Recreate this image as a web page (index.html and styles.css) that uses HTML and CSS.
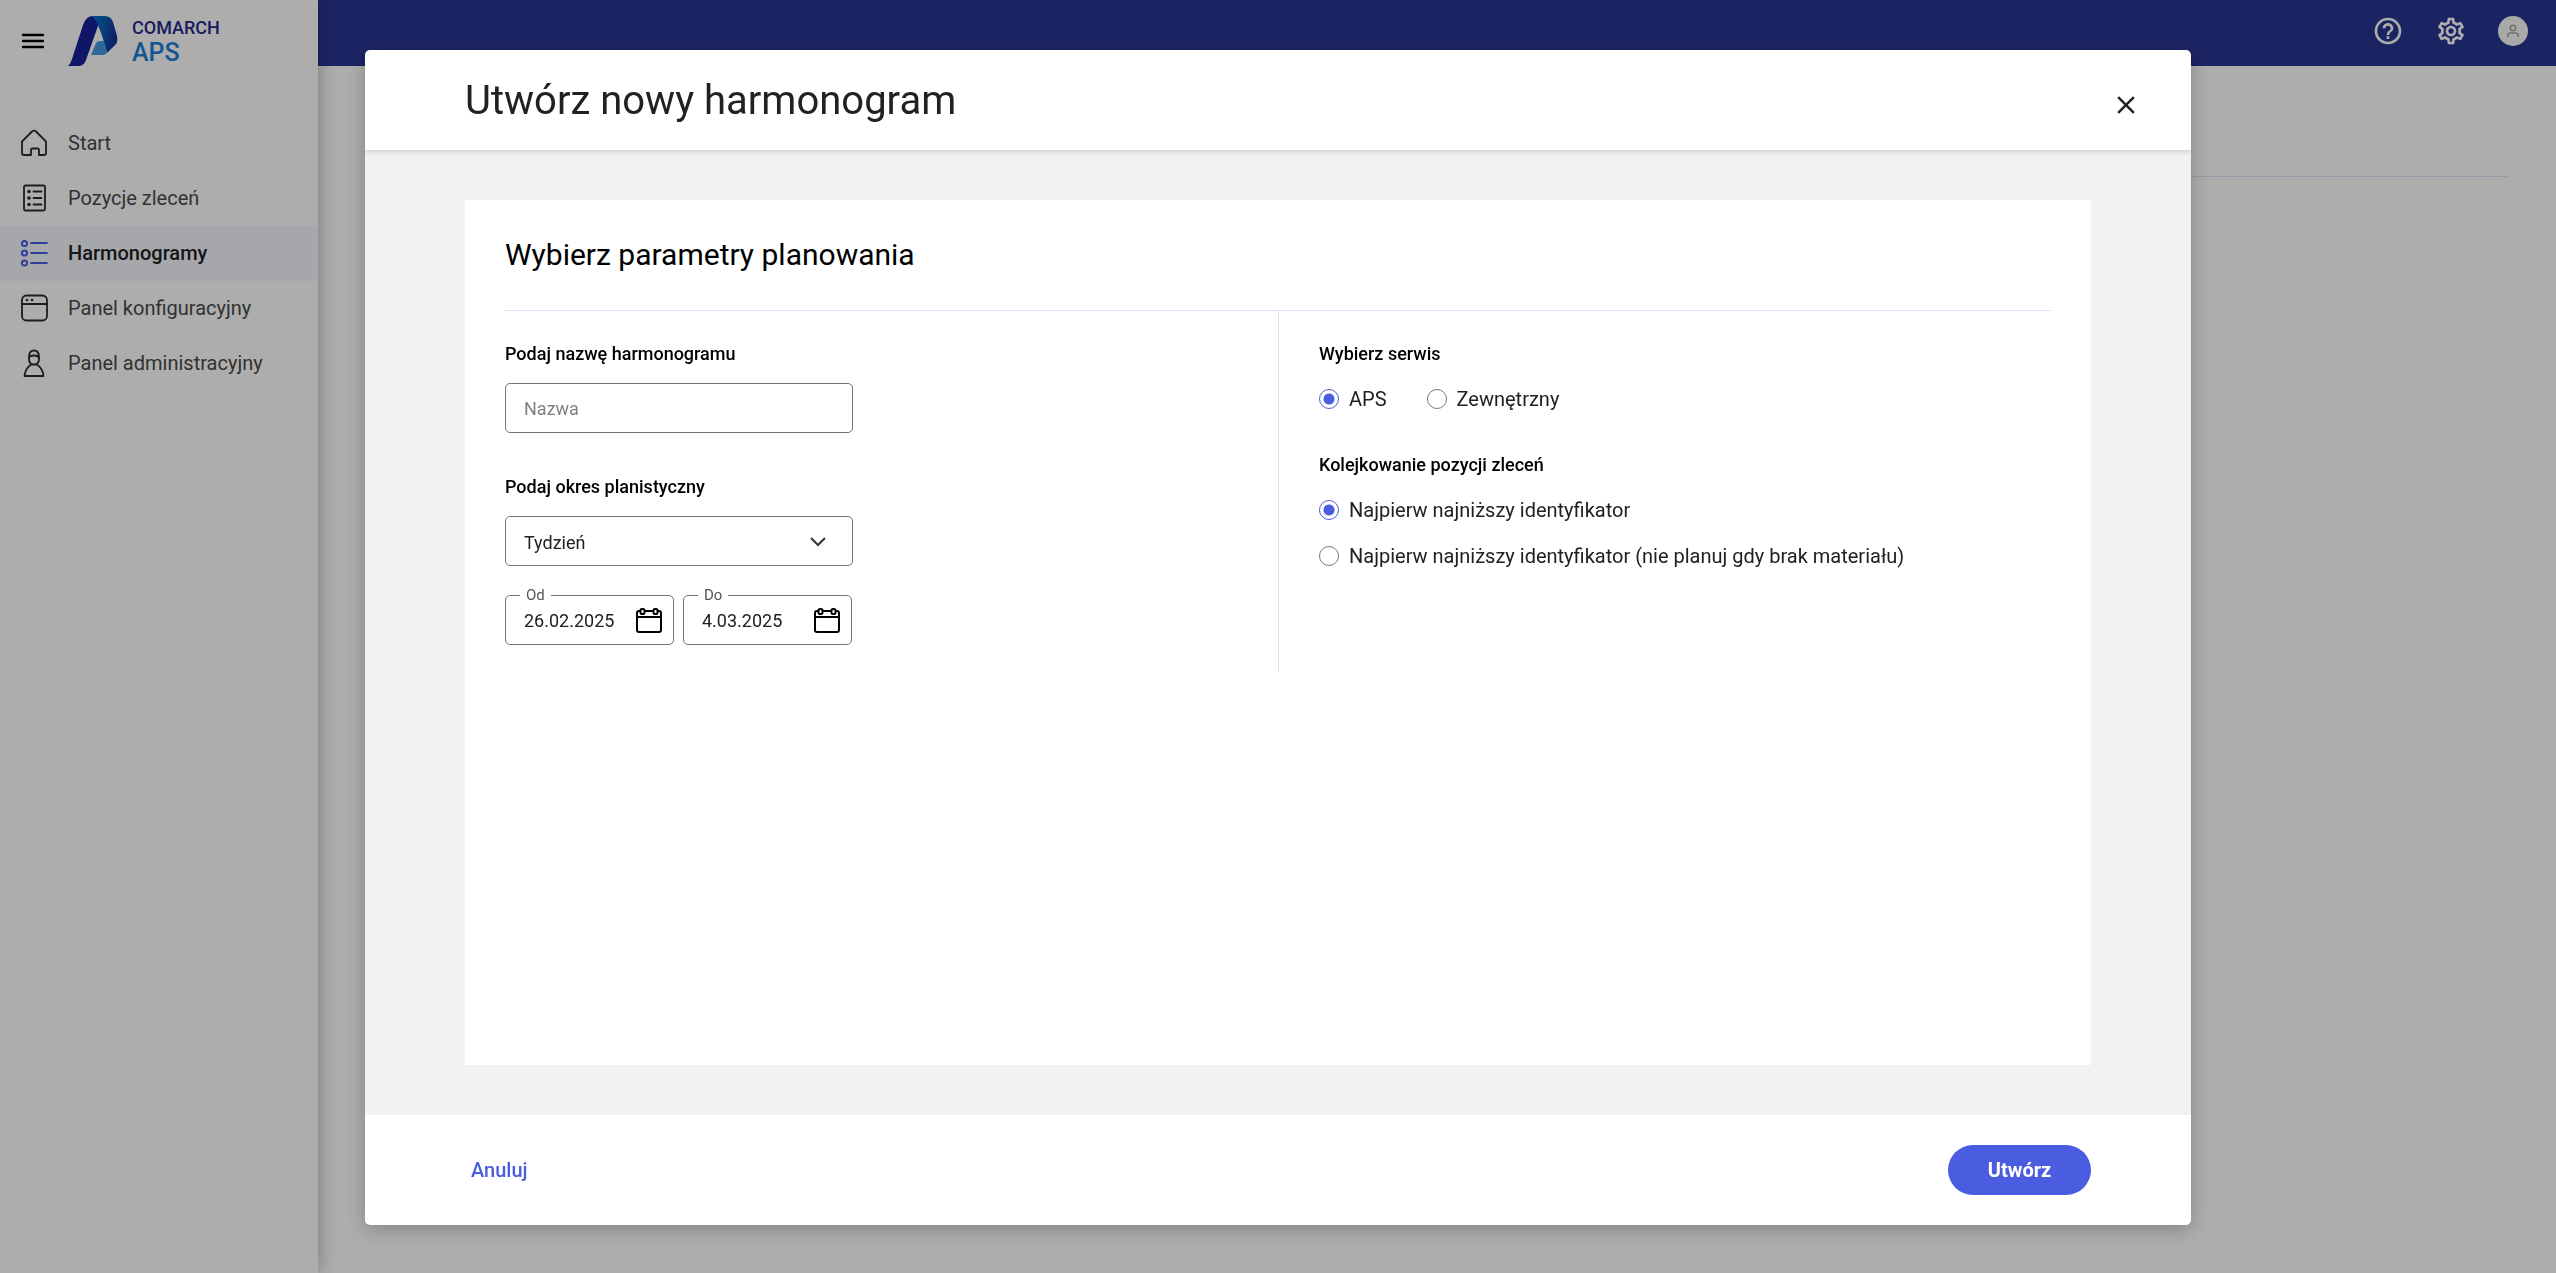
FILE: index.html
```html
<!DOCTYPE html>
<html lang="pl">
<head>
<meta charset="utf-8">
<title>Comarch APS – Harmonogramy</title>
<link rel="stylesheet" href="styles.css">
</head>
<body>
<div class="app">
  <aside class="sidebar">
    <div class="brand">
      <button class="icon-button" type="button" aria-label="Menu">
        <svg width="24" height="18" viewBox="0 0 24 18" stroke="#000" stroke-width="2.300" stroke-linecap="round"><path d="M2 3h20M2 9h20M2 15h20"/></svg>
      </button>
      <svg class="logo-mark" width="50" height="50" viewBox="0 0 50 50">
        <defs>
          <linearGradient id="fold" x1="0" y1="0" x2="1" y2="0.3"><stop offset="0" stop-color="#0072d8"/><stop offset="0.55" stop-color="#0d5cb4"/><stop offset="1" stop-color="#14309a"/></linearGradient>
        </defs>
        <path d="M0 50 Q3 47 4 43 L15 9 Q18 0 25 0 H30 L31 7 L18 44 Q16 50 10 50 Z" fill="#171f98"/>
        <path d="M23 0 H37 Q43 0 45 6 L49 20 Q50 25 48 28 L39 37 Q33 14 28 5 Q26 1 23 0 Z" fill="url(#fold)"/>
        <path d="M23 39 L28 27 Q29 25 32 25 H36 L39 37 Q37 39 34 39 Z" fill="#4499e2"/>
      </svg>
      <div class="logo-text"><span class="logo-company">COMARCH</span><span class="logo-product">APS</span></div>
    </div>
    <nav class="nav">
      <a class="nav-item" href="#"><svg width="28" height="28" viewBox="0 0 28 28"><path d="M2 12.500 L12 2.500 Q14 .800 16 2.500 L26 12.500 V24 Q26 26 24 26 H19 V21 Q19 19.500 17.500 19.500 H12.500 Q11 19.500 11 21 V26 H4 Q2 26 2 24 Z"/></svg>Start</a>
      <a class="nav-item" href="#"><svg width="28" height="28" viewBox="0 0 28 28"><rect x="4" y="1.500" width="21" height="25" rx="1.500"/><path d="M13.500 7.500h8M13.500 14h8M13.500 20.500h8"/><g class="dots"><circle cx="9" cy="7.500" r="1.800"/><circle cx="9" cy="14" r="1.800"/><circle cx="9" cy="20.500" r="1.800"/></g></svg>Pozycje zleceń</a>
      <a class="nav-item active" href="#"><svg width="28" height="28" viewBox="0 0 28 28"><g stroke-width="2"><circle cx="4.500" cy="4.500" r="2.600"/><circle cx="4.500" cy="14" r="2.600"/><circle cx="4.500" cy="24" r="2.600"/></g><path d="M11 4H27M11 14H27M11 24H27"/></svg>Harmonogramy</a>
      <a class="nav-item" href="#"><svg width="28" height="28" viewBox="0 0 28 28"><rect x="2" y="1.500" width="25" height="25" rx="4.500"/><path d="M2 10h25"/><g class="dots"><circle cx="7" cy="6" r="1.300"/><circle cx="12" cy="6" r="1.300"/></g></svg>Panel konfiguracyjny</a>
      <a class="nav-item" href="#"><svg width="28" height="28" viewBox="0 0 28 28"><path d="M4.500 27Q5 20 11 15.500H17Q23 20 23.500 27ZM9 8Q9 1.500 14 1.500T19 8V10Q19 15.500 14 15.500T9 10ZM9 10Q9 6.500 14 6.500T19 10"/></svg>Panel administracyjny</a>
    </nav>
  </aside>
  <div class="page">
    <header class="topbar">
      <button class="icon-button" type="button" aria-label="Pomoc">
        <svg width="32" height="32" viewBox="0 0 24 24" fill="#fff"><path d="M11 18h2v-2h-2v2zm1-16C6.480 2 2 6.480 2 12s4.480 10 10 10 10-4.480 10-10S17.520 2 12 2zm0 18c-4.410 0-8-3.590-8-8s3.590-8 8-8 8 3.590 8 8-3.590 8-8 8zm0-14c-2.210 0-4 1.790-4 4h2c0-1.100.900-2 2-2s2 .900 2 2c0 2-3 1.750-3 5h2c0-2.250 3-2.500 3-5 0-2.210-1.790-4-4-4z"/></svg>
      </button>
      <button class="icon-button" type="button" aria-label="Ustawienia">
        <svg width="32" height="32" viewBox="0 0 24 24" fill="#fff"><path d="M19.430 12.980c.040-.320.070-.640.070-.980 0-.340-.030-.660-.070-.980l2.110-1.650c.190-.150.240-.420.120-.640l-2-3.460c-.090-.160-.260-.250-.440-.250-.060 0-.120.010-.170.030l-2.490 1c-.520-.400-1.080-.730-1.690-.980l-.380-2.650C14.460 2.180 14.250 2 14 2h-4c-.250 0-.460.180-.490.420l-.380 2.650c-.610.250-1.170.590-1.690.980l-2.490-1c-.060-.020-.120-.030-.180-.030-.170 0-.340.090-.430.250l-2 3.460c-.130.220-.070.490.120.640l2.110 1.650c-.040.320-.070.650-.070.980 0 .330.030.660.070.980l-2.110 1.650c-.190.150-.240.420-.120.640l2 3.460c.090.160.260.250.440.250.060 0 .120-.010.170-.030l2.490-1c.520.400 1.080.730 1.690.980l.380 2.650c.030.240.240.420.490.420h4c.250 0 .460-.180.490-.420l.380-2.650c.610-.250 1.170-.590 1.690-.980l2.490 1c.060.020.120.030.180.030.170 0 .340-.090.430-.250l2-3.460c.120-.220.070-.490-.120-.640l-2.110-1.650zm-1.980-1.710c.040.310.050.520.050.730 0 .210-.020.430-.050.730l-.140 1.130.890.700 1.080.840-.700 1.210-1.270-.510-1.040-.420-.900.680c-.430.320-.840.560-1.250.730l-1.060.430-.160 1.130-.200 1.350h-1.400l-.190-1.350-.160-1.130-1.060-.430c-.430-.180-.830-.410-1.230-.710l-.910-.700-1.060.430-1.270.510-.700-1.210 1.080-.840.890-.700-.140-1.130c-.030-.310-.050-.540-.050-.740s.020-.430.050-.730l.140-1.130-.890-.700-1.080-.840.700-1.210 1.270.510 1.040.420.900-.680c.430-.320.840-.560 1.250-.730l1.060-.430.160-1.130.200-1.350h1.390l.190 1.350.160 1.130 1.060.430c.430.180.830.410 1.230.710l.910.700 1.060-.430 1.270-.510.700 1.210-1.070.850-.890.700.140 1.130zM12 8c-2.210 0-4 1.790-4 4s1.790 4 4 4 4-1.790 4-4-1.790-4-4-4zm0 6c-1.100 0-2-.900-2-2s.900-2 2-2 2 .900 2 2-.900 2-2 2z"/></svg>
      </button>
      <button class="icon-button" type="button" aria-label="Konto">
        <svg width="30" height="30" viewBox="0 0 30 30"><circle cx="15" cy="15" r="15" fill="#fafafa"/><g fill="none" stroke="#a6a6a6" stroke-width="1.500"><circle cx="15" cy="12" r="2.700"/><path d="M9.800 21V19.500Q9.800 17 12.500 17H17.500Q20.200 17 20.200 19.500V21"/></g></svg>
      </button>
    </header>
    <div class="page-heading"></div>
  </div>
</div>

<div class="backdrop">
  <form class="dialog" role="dialog" aria-modal="true" aria-labelledby="dialog-title">
    <header class="dialog-header">
      <h1 class="dialog-title" id="dialog-title">Utwórz nowy harmonogram</h1>
      <button class="icon-button" type="button" aria-label="Zamknij">
        <svg width="30" height="30" viewBox="0 0 24 24" fill="#212121"><path d="M19 6.410L17.590 5 12 10.590 6.410 5 5 6.410 10.590 12 5 17.590 6.410 19 12 13.410 17.590 19 19 17.590 13.410 12z"/></svg>
      </button>
    </header>
    <div class="dialog-body">
      <section class="card">
        <h2 class="card-title">Wybierz parametry planowania</h2>
        <div class="columns">
          <div class="column">
            <label class="label" for="name">Podaj nazwę harmonogramu</label>
            <input class="control" id="name" type="text" placeholder="Nazwa">
            <label class="label label-next" for="period">Podaj okres planistyczny</label>
            <div class="select-wrap">
              <select class="control" id="period"><option>Tydzień</option></select>
              <svg class="chevron" width="16" height="10" viewBox="0 0 16 10"><path d="M1 1l7 7 7-7"/></svg>
            </div>
            <div class="dates">
              <fieldset class="date">
                <legend><label for="from">Od</label></legend>
                <input id="from" type="text" value="26.02.2025">
                <button class="icon-button" type="button" aria-label="Wybierz datę od"><svg class="calendar" width="28" height="26" viewBox="0 0 28 26"><path d="M5 3H4Q2 3 2 5V22Q2 24 4 24H24Q26 24 26 22V5Q26 3 24 3H23M10 3H18M2 9H26"/><rect x="5.500" y="1" width="4" height="5" rx="1.500"/><rect x="18.500" y="1" width="4" height="5" rx="1.500"/></svg></button>
              </fieldset>
              <fieldset class="date">
                <legend><label for="to">Do</label></legend>
                <input id="to" type="text" value="4.03.2025">
                <button class="icon-button" type="button" aria-label="Wybierz datę do"><svg class="calendar" width="28" height="26" viewBox="0 0 28 26"><path d="M5 3H4Q2 3 2 5V22Q2 24 4 24H24Q26 24 26 22V5Q26 3 24 3H23M10 3H18M2 9H26"/><rect x="5.500" y="1" width="4" height="5" rx="1.500"/><rect x="18.500" y="1" width="4" height="5" rx="1.500"/></svg></button>
              </fieldset>
            </div>
          </div>
          <div class="column">
            <div class="label" id="service-label">Wybierz serwis</div>
            <div class="radios radios-inline" role="radiogroup" aria-labelledby="service-label">
              <label class="radio"><input type="radio" name="service" checked>APS</label>
              <label class="radio"><input type="radio" name="service">Zewnętrzny</label>
            </div>
            <div class="label label-next" id="queue-label">Kolejkowanie pozycji zleceń</div>
            <div class="radios" role="radiogroup" aria-labelledby="queue-label">
              <label class="radio"><input type="radio" name="queue" checked>Najpierw najniższy identyfikator</label>
              <label class="radio"><input type="radio" name="queue">Najpierw najniższy identyfikator (nie planuj gdy brak materiału)</label>
            </div>
          </div>
        </div>
      </section>
    </div>
    <footer class="dialog-footer">
      <button class="button-text" type="button">Anuluj</button>
      <button class="button-primary" type="submit">Utwórz</button>
    </footer>
  </form>
</div>
</body>
</html>
```
FILE: styles.css
```css
* { box-sizing: border-box; }

body {
  margin: 0;
  font-family: Roboto, "Liberation Sans", sans-serif;
  font-size: 20px;
  line-height: 24px;
  color: #212121;
  background: #fff;
}

button, input, select { font: inherit; color: inherit; }
svg { display: block; }

.icon-button {
  display: flex;
  padding: 0;
  border: 0;
  background: none;
  cursor: pointer;
}

/* Application shell */
.app { display: flex; min-height: 100vh; }

.sidebar {
  position: relative;
  width: 318px;
  flex: none;
  background: #fff;
  box-shadow: 2px 0 16px rgba(0, 0, 0, 0.25);
}

.brand {
  display: flex;
  align-items: center;
  height: 82px;
  padding-left: 21px;
}
.logo-mark { margin-left: 23px; }
.logo-text {
  display: flex;
  flex-direction: column;
  margin-left: 14px;
  font-weight: 500;
}
.logo-company { font-size: 18px; line-height: 24px; color: #1f2a8c; }
.logo-product { font-size: 25px; line-height: 26px; color: #1e7fd6; }

.nav { padding-top: 34px; }
.nav-item {
  display: flex;
  align-items: center;
  gap: 20px;
  height: 55px;
  padding: 0 0 2px 20px;
  color: #4a4a4a;
  text-decoration: none;
}
.nav-item svg {
  fill: none;
  stroke: #2b2b2b;
  stroke-width: 1.8px;
  stroke-linejoin: round;
  stroke-linecap: round;
}
.nav-item .dots { fill: #2b2b2b; stroke: none; }
.nav-item.active { background: #f4f6fb; color: #212121; font-weight: 500; }
.nav-item.active svg { stroke: #4a5ce0; }

.page { flex: 1; }
.topbar {
  display: flex;
  justify-content: flex-end;
  align-items: center;
  gap: 31px;
  height: 66px;
  padding: 0 28px 4px 0;
  background: #293593;
}
.page-heading {
  height: 111px;
  margin: 0 48px;
  border-bottom: 1px solid #e0e0f8;
}

/* Dialog */
.backdrop {
  position: fixed;
  inset: 0;
  display: flex;
  padding: 50px 365px 48px;
  background: rgba(0, 0, 0, 0.32);
}
.dialog {
  display: flex;
  flex-direction: column;
  flex: 1;
  overflow: hidden;
  border-radius: 5px;
  background: #fff;
  box-shadow: 0 4px 20px rgba(0, 0, 0, 0.25);
}

.dialog-header {
  position: relative;
  display: flex;
  justify-content: space-between;
  align-items: center;
  height: 100px;
  padding: 0 50px 0 100px;
  box-shadow: 0 1px 6px rgba(0, 0, 0, 0.18);
}
.dialog-header .icon-button { padding-top: 10px; }
.dialog-title { margin: 0; font-size: 40px; line-height: 48px; padding-top: 2px; font-weight: 400; }

.dialog-body {
  display: flex;
  flex: 1;
  padding: 50px 100px;
  background: #f2f2f2;
}
.card { flex: 1; padding: 40px; background: #fff; }
.card-title {
  margin: 0;
  padding-bottom: 40px;
  border-bottom: 1px solid #e0e0f8;
  font-size: 30px;
  line-height: 30px;
  font-weight: 400;
  color: #000;
}

.columns { display: grid; grid-template-columns: 1fr 1fr; }
.column { min-height: 361px; padding-top: 32px; }
.column + .column { padding-left: 40px; border-left: 1px solid #e0e0f0; }

.label {
  display: block;
  margin-bottom: 18px;
  font-size: 18px;
  line-height: 22px;
  font-weight: 500;
  color: #000;
}
.label-next { margin-top: 43px; }

.control {
  display: block;
  width: 348px;
  height: 50px;
  padding: 0 18px;
  border: 1px solid #757575;
  border-radius: 5px;
  background: #fff;
  font-size: 18px;
  appearance: none;
}
.control::placeholder { color: #808080; }

.select-wrap { position: relative; width: 348px; }
.select-wrap .control { padding-top: 4px; }
.chevron {
  position: absolute;
  top: 21px;
  right: 27px;
  fill: none;
  stroke: #333;
  stroke-width: 2px;
  pointer-events: none;
}

.dates { display: flex; gap: 9px; margin-top: 20px; }
.date {
  display: flex;
  align-items: center;
  width: 169px;
  height: 59px;
  min-width: 0;
  margin: 0;
  padding: 0 10px 6px 18px;
  border: 1px solid #757575;
  border-radius: 5px;
}
.date legend {
  margin-left: -4px;
  padding: 0 6px;
  font-size: 15px;
  line-height: 18px;
  color: #555;
}
.date input {
  flex: 1;
  min-width: 0;
  padding: 0;
  border: 0;
  outline: 0;
  background: none;
  font-size: 18px;
}
.calendar { fill: none; stroke: #000; stroke-width: 2px; }

.radios { display: flex; flex-direction: column; gap: 22px; padding-top: 4px; }
.radios-inline { flex-direction: row; gap: 40px; }
.radio { display: flex; align-items: center; gap: 10px; }
.radio input {
  width: 20px;
  height: 20px;
  margin: 0;
  border: 1px solid #757575;
  border-radius: 50%;
  appearance: none;
}
.radio input:checked {
  border-color: #4a5ce0;
  background: radial-gradient(circle, #4a5ce0 5px, transparent 6px);
}

.dialog-footer {
  display: flex;
  justify-content: space-between;
  align-items: center;
  height: 110px;
  padding: 0 100px;
}
.button-text {
  padding: 0 6px;
  border: 0;
  background: none;
  color: #4a5ce0;
  font-weight: 500;
}
.button-primary {
  width: 143px;
  height: 50px;
  border: 0;
  border-radius: 25px;
  background: #4a5ce0;
  color: #fff;
  font-weight: 700;
}
```
